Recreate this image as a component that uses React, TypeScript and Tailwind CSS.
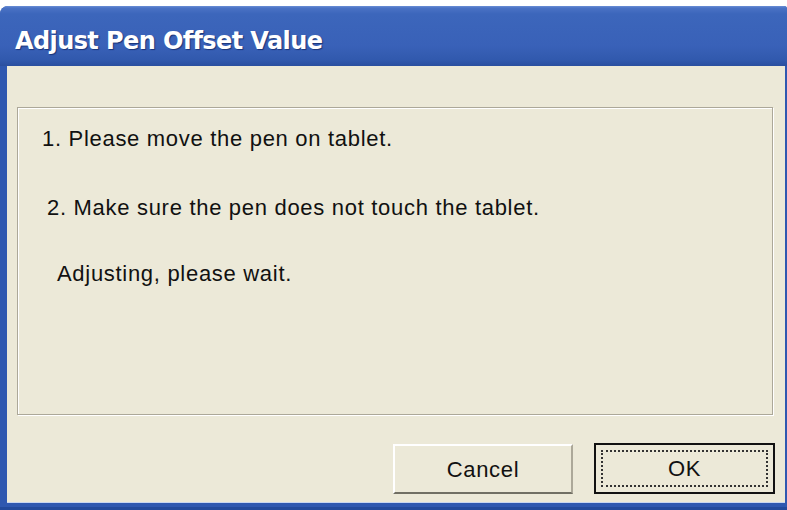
import React from "react";

export default function App() {
  const sans = { fontFamily: '"Liberation Sans", Arial, sans-serif' };
  return (
    <div className="w-[787px] h-[510px] bg-white pt-[6px] flex flex-col overflow-hidden">
      <div className="flex-1 flex flex-col rounded-tl-[8px] rounded-tr-[3px] bg-[#2f58b0] pl-[7px] pr-[2px] pb-[7px] shadow-[inset_0_-3px_0_#234a9c]">
        <div className="h-[60px] -ml-[7px] -mr-[2px] rounded-tl-[8px] rounded-tr-[3px] bg-[linear-gradient(to_bottom,#6a8fd6_0px,#4a72c4_2px,#3c66bb_8px,#3961b8_40px,#3159ad_54px,#2a4f9f_60px)] flex items-start pt-[20px] pl-[15px]">
          <span
            className="text-white font-bold text-[24px] leading-[30px] tracking-[-0.6px] [text-shadow:1px_1px_1px_#1a3377]"
            style={{ fontFamily: '"DejaVu Sans", Verdana, sans-serif' }}
          >
            Adjust Pen Offset Value
          </span>
        </div>
        <div className="flex-1 bg-[#ece9d8] flex flex-col pt-[41px] pl-[10px] pr-[12px] pb-[9px] shadow-[inset_0_-1px_0_#c9d6f0]" style={sans}>
          <div className="h-[308px] border border-[#aca899] shadow-[inset_1px_1px_0_#fff,1px_1px_0_#fff] flex flex-col pt-[19px] text-[22px] text-[#111] tracking-[0.7px]">
            <div className="ml-[24px] leading-[24px]">1. Please move the pen on tablet.</div>
            <div className="ml-[29px] mt-[45px] leading-[24px]">2. Make sure the pen does not touch the tablet.</div>
            <div className="ml-[39px] mt-[42px] leading-[24px]">Adjusting, please wait.</div>
          </div>
          <div className="flex-1 flex items-end justify-end gap-[21px]">
            <button className="w-[180px] h-[50px] bg-[#ece9d8] border-t-[2px] border-l-[2px] border-t-white border-l-white border-b-[2px] border-r-[2px] border-b-[#716f64] border-r-[#aca899] text-[22px] text-[#111] tracking-[0.7px]">
              Cancel
            </button>
            <button className="w-[181px] h-[51px] -mr-[2px] bg-[#ece9d8] border-[2px] border-[#111] p-[5px] flex items-stretch">
              <span className="flex-1 border-[2px] border-dotted border-[#333] flex items-center justify-center text-[22px] text-[#111] tracking-[0.7px]">
                OK
              </span>
            </button>
          </div>
        </div>
      </div>
    </div>
  );
}
